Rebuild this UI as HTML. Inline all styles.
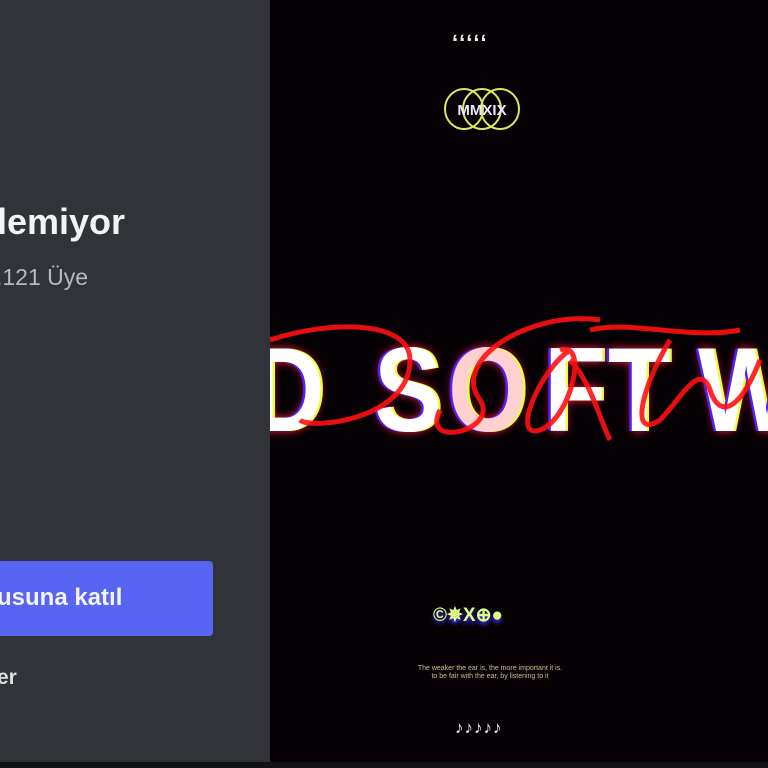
<!DOCTYPE html>
<html><head><meta charset="utf-8"><style>
html,body{margin:0;padding:0;width:768px;height:768px;overflow:hidden;background:#000;font-family:"Liberation Sans",sans-serif}
#l{position:absolute;left:0;top:0;width:270px;height:762px;background:#313338}
#r{position:absolute;left:270px;top:0;width:498px;height:762px;background:#050104;overflow:hidden}
#bot{position:absolute;left:0;top:762px;width:768px;height:6px;background:#111214}
.t{position:absolute;color:#f2f3f5}
.L{position:absolute;top:330px;font-size:120px;line-height:1;font-weight:bold;color:#fff;transform:scaleX(.85);transform-origin:left top;text-shadow:-3px 0 #5020ff,3px 0 #e8ff40,0 0 10px #ff2040}
</style></head><body>
<div id="l">
  <div class="t" style="left:-3px;top:201px;font-size:36px;font-weight:bold">lemiyor</div>
  <div class="t" style="left:-4px;top:264px;font-size:23px;color:#b5bac1">.121 Üye</div>
  <div style="position:absolute;left:-10px;top:561px;width:223px;height:75px;background:#5865f2;border-radius:4px"></div>
  <div class="t" style="left:-3px;top:584px;font-size:24px;font-weight:bold">usuna katıl</div>
  <div class="t" style="left:-3px;top:666px;font-size:21px;font-weight:bold;color:#dbdee1">er</div>
</div>
<div id="r">
  <div style="position:absolute;left:182px;top:30px;color:#eee;font-size:22px;letter-spacing:1px;font-weight:bold">ʻʻʻʻʻ</div>
  <svg style="position:absolute;left:172px;top:84px" width="86" height="50">
    <ellipse cx="22" cy="25" rx="19" ry="20" fill="none" stroke="#d8e860" stroke-width="2"/>
    <ellipse cx="40" cy="25" rx="19" ry="20" fill="none" stroke="#d8e860" stroke-width="2"/>
    <ellipse cx="58" cy="25" rx="19" ry="20" fill="none" stroke="#d8e860" stroke-width="2"/>
    <text x="40" y="31" text-anchor="middle" fill="#e8e8ff" font-family="Liberation Sans" font-weight="bold" font-size="15">MMXIX</text>
  </svg>
  <div class="L" style="left:-19px">D</div>
  <div class="L" style="left:104px">S</div>
  <div class="L" style="left:178px;color:#ffd0d0">O</div>
  <div class="L" style="left:274px">F</div>
  <div class="L" style="left:338px">T</div>
  <div class="L" style="left:428px">W</div>
  <svg style="position:absolute;left:0;top:300px" width="498" height="160" fill="none" stroke="#ff1010" stroke-width="5" opacity=".9">
    <path d="M0 40 C60 20 140 20 140 60 C140 120 40 130 30 120"/>
    <path d="M330 20 C260 10 180 60 210 100 C230 130 150 150 170 110"/>
    <path d="M300 50 C270 70 240 140 270 130 C300 120 320 40 290 50"/>
    <path d="M300 60 C320 80 330 120 340 140 M320 30 C360 20 420 40 470 30"/>
    <path d="M400 40 C370 90 360 140 390 120 C410 100 430 60 440 90 C450 120 470 110 490 60"/>
  </svg>
  <div style="position:absolute;left:163px;top:604px;color:#e0ff80;font-size:19px;font-weight:bold;text-shadow:0 3px 4px #4030ff">©✵X⊕●</div>
  <div style="position:absolute;left:125px;top:665px;width:190px;color:#cbc08a;font-size:7px;text-align:center;line-height:8px">The weaker the ear is, the more important it is.<br>to be fair with the ear, by listening to it</div>
  <div style="position:absolute;left:185px;top:718px;color:#eee;font-size:17px;letter-spacing:1px">♪♪♪♪♪</div>
</div>
<div id="bot"></div>
</body></html>
